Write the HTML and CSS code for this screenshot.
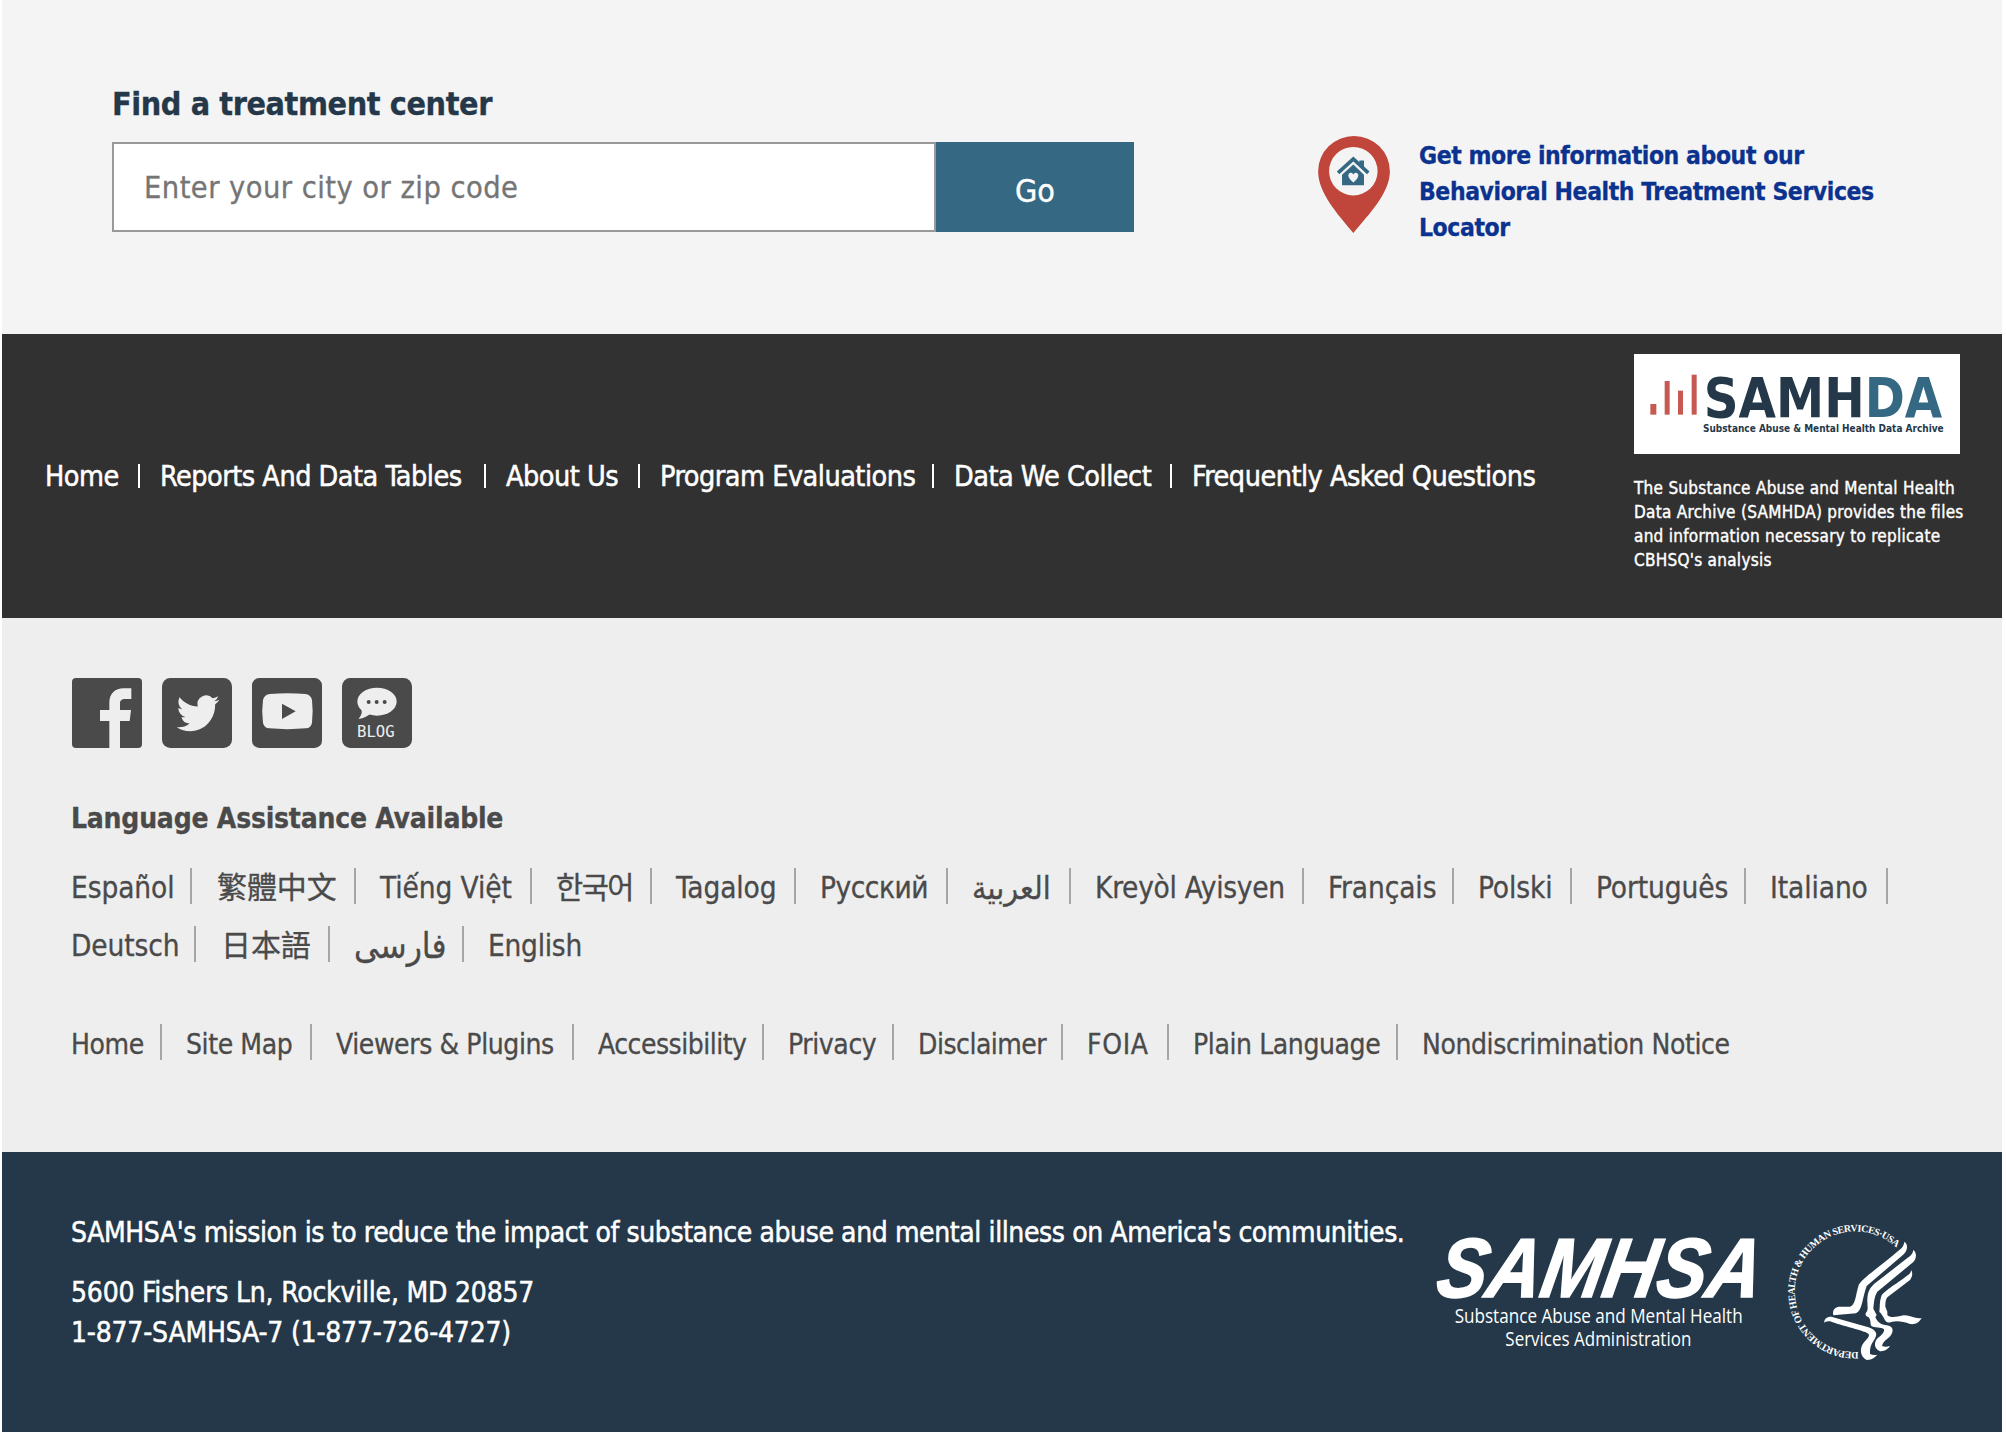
FILE: index.html
```html
<!DOCTYPE html>
<html lang="en">
<head>
<meta charset="utf-8">
<title>SAMHSA</title>
<link rel="stylesheet" href="styles.css">
</head>
<body>
<div class="page">
  <section class="finder">
    <form class="search">
      <h2 class="search-title">Find a treatment center</h2>
      <div class="search-row">
        <input class="search-input" type="text" placeholder="Enter your city or zip code">
        <button class="search-button" type="button">Go</button>
      </div>
    </form>
    <a class="locator" href="#">
      <svg class="pin" viewBox="0 0 216 292">
        <path fill="#c0453b" d="M106 292C60 236 0 172 0 106A108 106 0 0 1 216 106C216 172 152 236 106 292Z"/>
        <circle cx="106" cy="106" r="73" fill="#f4f4f4"/>
        <path fill="#346883" d="M124 74h14v28l-14-12z"/>
        <path fill="none" stroke="#346883" stroke-width="11" d="M60 111L106 69L151 111"/>
        <path fill="#346883" d="M72 117L106 86L138 117V148H72Z"/>
        <path fill="#f4f4f4" d="M106 140C98 132 91 127 91 119C91 110 102 108 106 116C110 108 121 110 121 119C121 127 114 132 106 140Z"/>
      </svg>
      <span class="locator-text">Get more information about our<br>Behavioral Health Treatment Services<br>Locator</span>
    </a>
  </section>

  <section class="data">
    <ul class="data-nav">
      <li>Home</li><li>Reports And Data Tables</li><li>About Us</li><li>Program Evaluations</li><li>Data We Collect</li><li>Frequently Asked Questions</li>
    </ul>
    <div class="archive">
      <svg class="archive-logo" viewBox="0 0 978 300">
        <g fill="#c65a52">
          <rect x="49" y="150" width="18" height="32"/><rect x="92" y="81" width="15" height="101"/><rect x="132" y="110" width="15" height="72"/><rect x="173" y="62" width="15" height="120"/>
        </g>
        <text class="archive-name" x="209" y="190" textLength="716" lengthAdjust="spacingAndGlyphs">SAMH<tspan fill="#346883">DA</tspan></text>
        <text class="archive-sub" x="207" y="235" textLength="722" lengthAdjust="spacingAndGlyphs">Substance Abuse &amp; Mental Health Data Archive</text>
      </svg>
      <p class="archive-text">The Substance Abuse and Mental Health<br>Data Archive (SAMHDA) provides the files<br>and information necessary to replicate<br>CBHSQ's analysis</p>
    </div>
  </section>

  <section class="links">
    <div class="social">
      <svg viewBox="0 0 210 210"><rect width="210" height="210" rx="12" fill="#4a4a4a"/><path fill="#eee" d="M112 210V129H84V96H112V74C112 46 130 31 155 31H178V63H160C148 63 144 68 144 77V96H177L173 129H144V210Z"/></svg>
      <svg viewBox="0 0 210 210"><rect width="210" height="210" rx="25" fill="#4a4a4a"/><path fill="#eee" transform="translate(44 40) scale(5.35 5.5)" d="M23.953 4.57a10 10 0 01-2.825.775 4.958 4.958 0 002.163-2.723c-.951.555-2.005.959-3.127 1.184a4.92 4.92 0 00-8.384 4.482C7.69 8.095 4.067 6.13 1.64 3.162a4.822 4.822 0 00-.666 2.475c0 1.71.87 3.213 2.188 4.096a4.904 4.904 0 01-2.228-.616v.06a4.923 4.923 0 003.946 4.827 4.996 4.996 0 01-2.212.085 4.936 4.936 0 004.604 3.417 9.867 9.867 0 01-6.102 2.105c-.39 0-.779-.023-1.17-.067a13.995 13.995 0 007.557 2.209c9.053 0 13.998-7.496 13.998-13.985 0-.21 0-.42-.015-.63A9.935 9.935 0 0024 4.59z"/></svg>
      <svg viewBox="0 0 210 210"><rect width="210" height="210" rx="22" fill="#4a4a4a"/><path fill="#eee" d="M54 48Q106 43 160 48Q176 50 180 66Q184 100 180 134Q177 150 162 151Q106 156 52 151Q36 150 33 134Q28 100 33 66Q37 50 54 48Z"/><path fill="#4a4a4a" d="M90 77L131 100L90 123Z"/></svg>
      <svg viewBox="0 0 210 210"><rect width="210" height="210" rx="25" fill="#4a4a4a"/><ellipse cx="105" cy="71" rx="59" ry="42" fill="#eee"/><path fill="#eee" d="M58 95C62 105 56 113 50 123C65 121 76 115 88 106Z"/><g fill="#4a4a4a"><circle cx="80" cy="72" r="6"/><circle cx="104" cy="72" r="6"/><circle cx="128" cy="72" r="6"/></g><text class="blog" x="45" y="176">BLOG</text></svg>
    </div>
    <h3 class="lang-title">Language Assistance Available</h3>
    <ul class="list lang-first">
      <li>Español</li><li class="cjk">繁體中文</li><li>Tiếng Việt</li><li lang="ko">한국어</li><li>Tagalog</li><li class="tight">Русский</li><li class="arabic">العربية</li><li class="snug">Kreyòl Ayisyen</li><li>Français</li><li>Polski</li><li>Português</li><li>Italiano</li>
    </ul>
    <ul class="list lang-second">
      <li>Deutsch</li><li class="cjk">日本語</li><li class="farsi">فارسی</li><li class="snug">English</li>
    </ul>
    <ul class="list site">
      <li>Home</li><li>Site Map</li><li>Viewers &amp; Plugins</li><li class="tight">Accessibility</li><li>Privacy</li><li class="tight">Disclaimer</li><li class="wide">FOIA</li><li>Plain Language</li><li>Nondiscrimination Notice</li>
    </ul>
  </section>

  <footer class="footer">
    <div class="mission">
      <p class="statement">SAMHSA's mission is to reduce the impact of substance abuse and mental illness on America's communities.</p>
      <p class="address">5600 Fishers Ln, Rockville, MD 20857<br>1-877-SAMHSA-7 (1-877-726-4727)</p>
    </div>
    <svg class="samhsa" viewBox="0 0 1050 540">
      <text class="samhsa-name" transform="translate(42 292) skewX(-10)" x="0" y="0" textLength="970" lengthAdjust="spacingAndGlyphs">SAMHSA</text>
      <text class="samhsa-sub" x="104" y="368" textLength="864" lengthAdjust="spacingAndGlyphs">Substance Abuse and Mental Health</text>
      <text class="samhsa-sub" x="256" y="437" textLength="558" lengthAdjust="spacingAndGlyphs">Services Administration</text>
    </svg>
    <svg class="hhs" viewBox="0 0 510 540">
      <path id="ring" fill="none" d="M265 456A181 181 0 1 1 387 151"/>
      <text class="hhs-text"><textPath href="#ring" textLength="714">DEPARTMENT OF HEALTH &amp; HUMAN SERVICES·USA</textPath></text>
      <g fill="#fff">
        <path d="M403 125C414 132 414 150 402 162L290 258C276 296 278 330 258 340L190 346C186 330 195 322 206 320L240 320C256 316 256 290 266 255C275 236 330 200 388 150C398 142 402 135 403 125Z"/>
        <path d="M430 150C441 158 440 175 430 186L322 275C312 290 312 310 310 326L320 345L316 352C320 360 326 372 345 375C362 377 372 382 366 400C358 418 340 420 336 438C346 442 352 440 360 438C352 450 340 454 330 454C312 446 312 430 320 418C330 408 344 400 342 388C335 380 312 384 304 378C300 372 304 362 296 352C290 350 284 346 288 338C296 330 292 318 292 305C292 280 296 268 312 252L415 172C425 165 428 160 430 150Z"/>
        <path d="M423 210C430 220 426 232 420 240L352 292C346 300 346 310 346 320L352 335L352 345C360 354 376 352 400 346C420 344 435 358 455 354C446 370 434 374 420 372C400 364 380 362 364 366C352 370 346 366 342 355C336 345 334 340 328 336C330 320 328 305 334 288C342 272 390 245 410 228C420 222 423 218 423 210Z"/>
        <path d="M162 368C164 354 172 350 184 350L290 380C312 386 322 396 318 408C314 424 298 430 300 462C308 466 314 466 322 464C312 476 300 480 290 480C270 470 268 446 280 430C288 418 300 412 296 402C290 394 210 376 180 364C174 364 168 364 162 368Z"/>
      </g>
    </svg>
  </footer>
</div>
</body>
</html>
```
FILE: styles.css
```css
* { box-sizing: border-box; }
body {
  margin: 0;
  background: #fff;
  font-family: "DejaVu Sans Condensed", "Noto Sans CJK TC", sans-serif;
}
h2, h3, p, ul { margin: 0; padding: 0; }
ul { list-style: none; }
svg { display: block; flex: none; }
.page { margin: 0 4px 2px 2px; }

.finder { display: flex; height: 334px; padding-left: 110px; background: #f4f4f4; }
.search { width: 1022px; padding-top: 84px; }
.search-title { margin-bottom: 18px; font-size: 32px; line-height: 40px; letter-spacing: -0.4px; color: #243849; -webkit-text-stroke: 0.3px; }
.search-row { display: flex; }
.search-input {
  width: 824px; height: 90px; padding: 0 0 0 30px;
  border: 2px solid #999; border-radius: 0; background: #fff;
  font: 30.5px "DejaVu Sans Condensed", sans-serif; letter-spacing: 0.45px; -webkit-text-stroke: 0.3px;
}
.search-input::placeholder { color: #757575; }
.search-button {
  width: 198px; height: 90px; padding: 8px 0 0; border: 0; background: #346883; color: #fff;
  font: 32px "DejaVu Sans Condensed", sans-serif; -webkit-text-stroke: 0.4px;
}
.locator { display: flex; gap: 29px; margin-left: 184px; padding-top: 136px; text-decoration: none; color: #0b328f; }
.pin { width: 72px; height: 97px; }
.locator-text { padding-top: 2px; font-size: 24.5px; font-weight: 700; line-height: 36px; letter-spacing: -0.43px; white-space: nowrap; -webkit-text-stroke: 0.3px; }

.data { display: flex; height: 284px; padding-left: 43px; background: #313131; color: #fff; }
.data-nav {
  display: grid; grid-template-columns: 95px 346px 154px 294px 238px 1fr;
  width: 1589px; height: 24px; margin-top: 130px;
  font-size: 28.5px; line-height: 25px; letter-spacing: -0.5px; white-space: nowrap; -webkit-text-stroke: 0.5px;
}
.data-nav li { height: 24px; border-right: 2px solid #fff; }
.data-nav li + li { padding-left: 20px; }
.data-nav li:last-child { border-right: 0; }
.archive { padding-top: 20px; }
.archive-logo { width: 326px; height: 100px; background: #fff; }
.archive-name { font: 700 163px "DejaVu Sans", sans-serif; fill: #243849; }
.archive-sub { font: 700 32px "DejaVu Sans", sans-serif; fill: #243849; }
.archive-text { margin-top: 22px; font-size: 17px; line-height: 24px; letter-spacing: 0.27px; white-space: nowrap; -webkit-text-stroke: 0.4px; }

.links { height: 534px; padding: 60px 0 0 69px; background: #eee; color: #4a4a4a; }
.social { display: flex; gap: 20px; margin-left: 1px; }
.social svg { width: 70px; height: 70px; }
.blog { font: 47px "DejaVu Sans Mono", monospace; fill: #eee; }
.lang-title { margin: 53px 0 31px; font-size: 28px; line-height: 36px; letter-spacing: -0.22px; -webkit-text-stroke: 0.3px; }
.list { display: grid; height: 36px; font-size: 29.5px; line-height: 36px; letter-spacing: -0.1px; white-space: nowrap; -webkit-text-stroke: 0.3px; }
.list li { height: 36px; padding-top: 2px; border-right: 2px solid #a6a6a6; }
.list li + li { padding-left: 24px; }
.lang-first { grid-template-columns: 121px 164px 176px 120px 144px 152px 123px 233px 150px 118px 174px 142px; }
.lang-first li:lang(ko) { letter-spacing: -1.5px; }
.lang-second { grid-template-columns: 125px 134px 134px 1fr; margin-top: 22px; }
.list .cjk { padding-left: 25px; font-size: 30px; }
.list .tight { letter-spacing: -0.5px; }
.list .snug { letter-spacing: -0.27px; }
.list .arabic { font-size: 32px; }
.list .farsi { font-size: 35px; }
.site { grid-template-columns: 91px 150px 262px 190px 130px 169px 106px 229px 1fr; margin-top: 62px; font-size: 28px; letter-spacing: -0.4px; }
.site li { padding-top: 3px; }
.list .wide { letter-spacing: 0.7px; }
.lang-second li:last-child, .site li:last-child { border-right: 0; }

.footer { display: flex; height: 280px; padding: 48px 0 0 69px; background: #243849; color: #fff; }
.mission { width: 1349px; padding-top: 13px; font-size: 28px; line-height: 40px; white-space: nowrap; -webkit-text-stroke: 0.5px; }
.statement { margin-bottom: 20px; letter-spacing: -0.39px; }
.address { letter-spacing: -0.2px; }
.samhsa { width: 350px; height: 180px; }
.samhsa-name { font: italic 700 252px "Liberation Sans", sans-serif; fill: #fff; stroke: #fff; stroke-width: 5px; }
.samhsa-sub { font: 59px "Open Sans", sans-serif; fill: #fff; }
.hhs { width: 170px; height: 180px; }
.hhs-text { font: 700 30px "Liberation Serif", serif; fill: #fff; }
```
